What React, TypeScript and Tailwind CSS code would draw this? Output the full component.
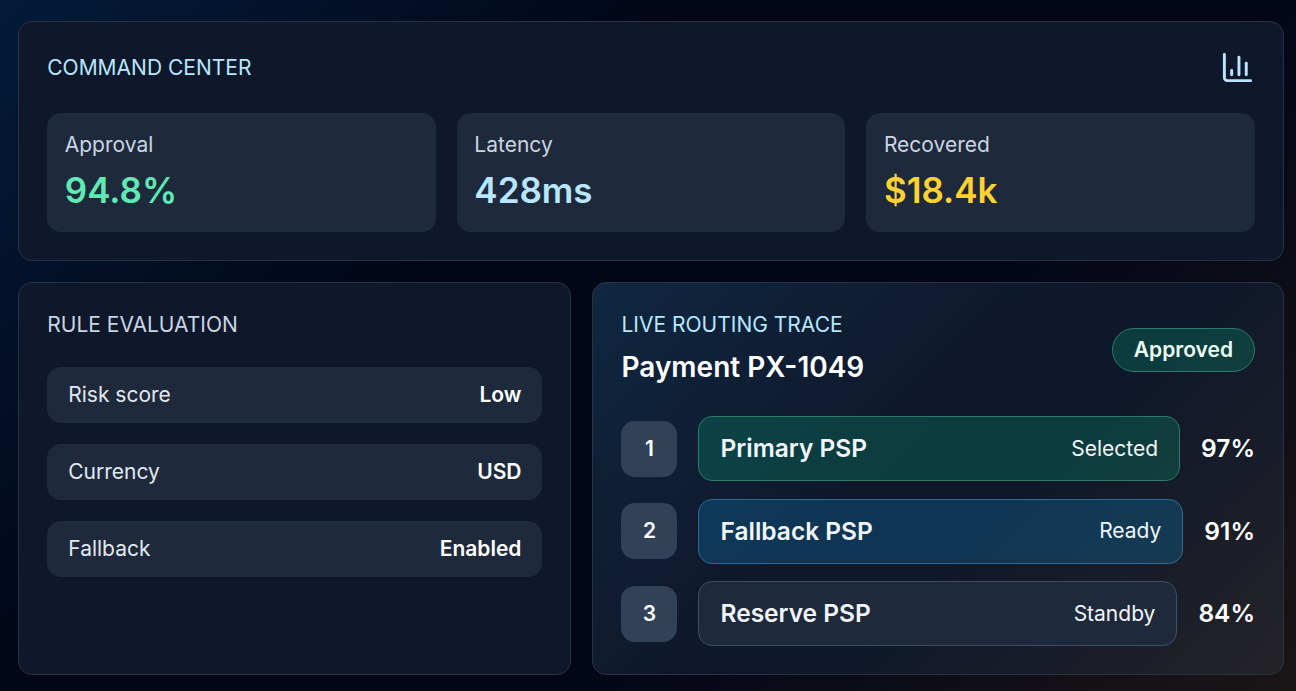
import React from "react";

const metrics = [
  { label: "Approval", value: "94.8%", tone: "text-[#5ee9b5]" },
  { label: "Latency", value: "428ms", tone: "text-[#b8e6fe]" },
  { label: "Recovered", value: "$18.4k", tone: "text-[#ffd230]" },
];

const rules = [
  { name: "Risk score", value: "Low" },
  { name: "Currency", value: "USD" },
  { name: "Fallback", value: "Enabled" },
];

const routes = [
  { name: "Primary PSP", status: "Selected", score: "97%", tone: "border-[#2a7b68] bg-[#00d492]/20" },
  { name: "Fallback PSP", status: "Ready", score: "91%", tone: "border-[#2c6b94] bg-[#0ea5e9]/22" },
  { name: "Reserve PSP", status: "Standby", score: "84%", tone: "border-[#404e64] bg-[#1e293b]" },
];

function ChartIcon() {
  return (
    <svg
      viewBox="0 0 24 24"
      className="size-[35px] text-[#b8e6fe]"
      fill="none"
      stroke="currentColor"
      strokeWidth="2"
      strokeLinecap="round"
      strokeLinejoin="round"
    >
      <path d="M3 3v16a2 2 0 0 0 2 2h16" />
      <path d="M18 17V9" />
      <path d="M13 17V5" />
      <path d="M8 17v-3" />
    </svg>
  );
}

export default function App() {
  return (
    <div className="flex h-[691px] w-[1296px] flex-col gap-[21px] overflow-hidden bg-[#020617] bg-[linear-gradient(135deg,rgba(5,90,155,0.25),transparent_35%,transparent_63%,rgba(245,158,11,0.1))] pt-[21px] pr-[12px] pb-[16px] pl-[18.25px] font-['Inter',sans-serif] text-[21px] leading-[28px] text-white">
      <section className="shrink-0 rounded-[14px] border border-[#283244] bg-[#0f172a] p-[28px]">
        <div className="flex items-center justify-between">
          <h2 className="text-[#b8e6fe]">COMMAND CENTER</h2>
          <ChartIcon />
        </div>
        <div className="mt-[28px] grid grid-cols-3 gap-[21px]">
          {metrics.map((m) => (
            <div key={m.label} className="rounded-[14px] bg-[#1e293b] p-[17.5px]">
              <div className="text-[#cad5e2]">{m.label}</div>
              <div className={`mt-[7px] text-[35px] leading-[49px] font-semibold ${m.tone}`}>{m.value}</div>
            </div>
          ))}
        </div>
      </section>

      <div className="grid h-[393px] grid-cols-[0.8fr_1fr] gap-[21px]">
        <section className="rounded-[14px] border border-[#283244] bg-[#0f172a] p-[28px]">
          <h2 className="text-[#cad5e2]">RULE EVALUATION</h2>
          <div className="mt-[28px] grid gap-[21px]">
            {rules.map((r) => (
              <div key={r.name} className="flex items-center justify-between rounded-[14px] bg-[#1e293b] px-[21px] py-[14px]">
                <span className="text-[#e2e8f0]">{r.name}</span>
                <span className="font-semibold">{r.value}</span>
              </div>
            ))}
          </div>
        </section>

        <section className="rounded-[14px] border border-[#283244] bg-[#0f172a] bg-[linear-gradient(135deg,rgba(14,165,233,0.115),transparent_45%,transparent_58%,rgba(245,158,11,0.09))] p-[28px]">
          <div className="flex items-center justify-between">
            <div>
              <h2 className="text-[#b8e6fe]">LIVE ROUTING TRACE</h2>
              <div className="mt-[7px] text-[28px] leading-[42px] font-semibold">Payment PX-1049</div>
            </div>
            <span className="rounded-full border border-[#2a7b68] bg-[#00d492]/20 px-[21px] py-[7px] font-semibold text-[#ecfdf5]">
              Approved
            </span>
          </div>
          <div className="mt-[28px] grid gap-[17.5px]">
            {routes.map((r, i) => (
              <div key={r.name} className="flex items-center gap-[21px]">
                <span className="flex size-[56px] shrink-0 items-center justify-center rounded-[14px] bg-[#314158] font-semibold">
                  {i + 1}
                </span>
                <div className={`flex flex-1 items-center justify-between rounded-[14px] border px-[21px] py-[14px] ${r.tone}`}>
                  <span className="text-[24.5px] leading-[35px] font-semibold text-[#f1f5f9]">{r.name}</span>
                  <span className="text-[#f1f5f9]">{r.status}</span>
                </div>
                <span className="text-[24.5px] leading-[35px] font-semibold">{r.score}</span>
              </div>
            ))}
          </div>
        </section>
      </div>
    </div>
  );
}
